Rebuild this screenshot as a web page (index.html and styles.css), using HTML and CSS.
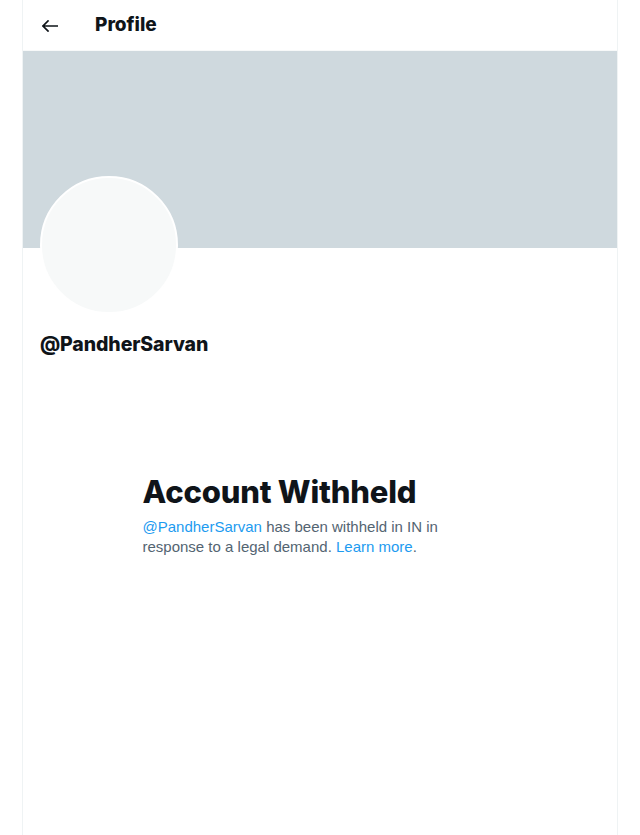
FILE: index.html
```html
<!DOCTYPE html>
<html lang="en">
<head>
    <meta charset="UTF-8">
    <meta name="viewport" content="width=device-width, initial-scale=1.0">
    <title>Profile</title>
    <link rel="stylesheet" href="styles.css">
</head>
<body>
    <div class="column">
        <header class="top-bar">
            <a href="#" class="back-button" aria-label="Back">
                <svg viewBox="0 0 16 12" width="16" height="12">
                    <path d="M1 6H15.5M6 1L1 6L6 11" fill="none" stroke="#0f1419" stroke-width="1.7" stroke-linecap="square" stroke-linejoin="miter"/>
                </svg>
            </a>
            <h2 class="top-title">Profile</h2>
        </header>

        <div class="banner"></div>

        <div class="profile-info">
            <div class="avatar"></div>
            <div class="handle">@PandherSarvan</div>
        </div>

        <div class="empty-state">
            <h1 class="empty-title">Account Withheld</h1>
            <p class="empty-text"><a href="#" class="link">@PandherSarvan</a> has been withheld in IN in response to a legal demand. <a href="#" class="link">Learn more</a>.</p>
        </div>
    </div>
</body>
</html>
```

FILE: styles.css
```css
:root {
    --text-color: #0f1419;
    --muted-color: #536471;
    --link-color: #1d9bf0;
    --border-color: #eff3f4;
    --banner-color: #cfd9de;
    --avatar-color: #f7f9f9;
}

body {
    margin: 0;
    background: #ffffff;
    color: var(--text-color);
    font-family: 'Liberation Sans', Arial, sans-serif;
}

.column {
    width: 594px;
    min-height: 835px;
    margin-left: 22px;
    border-left: 1px solid var(--border-color);
    border-right: 1px solid var(--border-color);
}

.top-bar {
    height: 50px;
    display: flex;
    align-items: center;
    padding: 0 16px 0 19px;
    border-bottom: 1px solid #f7f9f9;
}

.back-button {
    display: flex;
    align-items: center;
    width: 16px;
    height: 24px;
    margin-right: 37px;
    margin-top: 2px;
}

.top-title {
    margin: 0;
    font-family: Inter, 'Liberation Sans', sans-serif;
    font-size: 19px;
    line-height: 24px;
    font-weight: 800;
}

.banner {
    height: 197px;
    background: var(--banner-color);
}

.profile-info {
    padding: 0 16px 0 17px;
}

.avatar {
    width: 134px;
    height: 134px;
    margin-top: -72px;
    border: 2px solid #ffffff;
    border-radius: 50%;
    background: var(--avatar-color);
}

.handle {
    margin-top: 18px;
    font-family: Inter, 'Liberation Sans', sans-serif;
    font-size: 19.5px;
    line-height: 24px;
    font-weight: 800;
    letter-spacing: -0.1px;
}

.empty-state {
    width: 357px;
    margin: 118px auto 0;
    padding-left: 1px;
    box-sizing: border-box;
}

.empty-title {
    margin: 0 0 7px;
    font-family: Inter, 'Liberation Sans', sans-serif;
    font-size: 31px;
    line-height: 36px;
    font-weight: 800;
    letter-spacing: -0.2px;
}

.empty-text {
    margin: 0;
    font-size: 15px;
    line-height: 20px;
    color: var(--muted-color);
}

.link {
    color: var(--link-color);
    text-decoration: none;
}
```
